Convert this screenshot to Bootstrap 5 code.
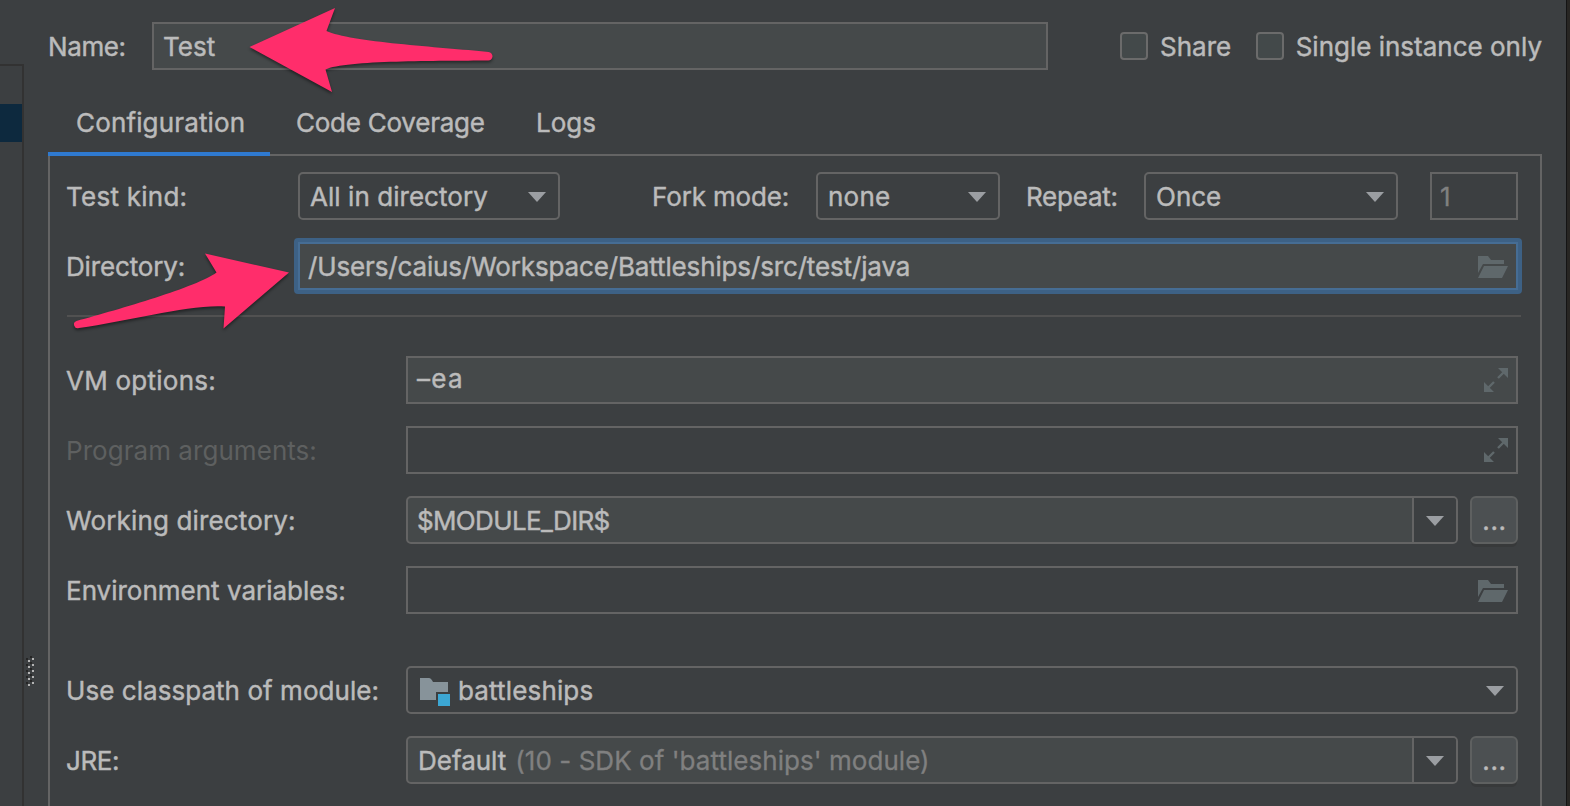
<!DOCTYPE html>
<html lang="en">
<head>
<meta charset="utf-8">
<title>Run configuration</title>
<link href="https://cdn.jsdelivr.net/npm/bootstrap@5.3.0/dist/css/bootstrap.min.css" rel="stylesheet">
<style>
body{width:1570px;height:806px;overflow:hidden;background:#3c3f41;color:#bbb;font:26px/34px Inter,"Noto Sans",sans-serif;-webkit-text-stroke:.45px}
.side{width:24px;margin-top:64px;border:2px solid #323232;border-left:0;border-bottom:0}
.side-sel{height:38px;margin-top:38px;background:#0d293e}
.grip{left:26px;top:656px}
.main{width:1518px}
.edge{width:4px;margin-left:24px;background:#282623;border-left:1px solid #141414}
.name-row{padding-top:22px}
.name-row label{width:104px}
.box{height:48px;border:2px solid #646464;padding:1px 0 0 9px;display:flex;align-items:center;white-space:nowrap}
.fill{background:#45494a}
.rnd{border-radius:5px}
.arrow{width:18px;height:10px;flex:none}
.box>.arrow{margin:0 12px 0 auto}
.w-name{width:896px}.w-kind{width:262px}.w-fork{width:184px}.w-rep{width:254px}.w-num{width:88px;margin-left:32px}
.l-kind{width:232px}.l-fork{width:164px;margin-left:92px}.l-rep{width:118px;margin-left:26px}
.check{width:28px;height:28px;flex:none;border:2px solid #6b6b6b;border-radius:4px;background:#43494a;margin-right:12px}
.share{margin-right:20.5px}
.tabs{height:84px;padding:36px 0 0 28px;white-space:nowrap}
.tabs>span{width:220px}.tabs>span+span{width:240px}
.tab-line{width:222px;height:4px;left:0;bottom:-2px;background:#2f7ad0;z-index:1}
.panel{border:2px solid #646464;border-bottom:0;height:652px;padding:16px 22px 0 16px}
.line{display:flex;align-items:center;height:48px;margin-bottom:22px;white-space:nowrap}
.line>span,.name-row>label,.name-row>.txt{padding-top:2px}
.kinds{margin-bottom:18px}
.kinds .box{padding-left:10px}
.kinds .w-num{padding-left:8px}
.dir{height:56px;margin-bottom:0}
.dir>span{width:228px}
.lab{width:340px;flex:none}
.focus-box{height:56px;margin-right:-4px;border:4px solid #3d6185;border-radius:4px}
.focus-box .box{border-color:#466d94;padding-left:8px}
.sep{height:2px;background:#515151;margin:21px -3px 39px 1px}
.ico{margin:0 8px 0 auto;fill:#5f686b;stroke:#5f686b;stroke-width:0}
.ico-ex{margin-top:-1px}
.drop{width:44px;height:44px;border-left:2px solid #646464;background:#3c3f41;margin:-1px 0 0 auto;padding:2px 0 0 12px;display:flex;align-items:center;border-radius:0 3px 3px 0}
.more{width:48px;height:48px;border:2px solid #5e6060;border-radius:6px;background:#4c5052;box-shadow:0 4px 0 -1px #37393a;margin-left:12px;display:flex;align-items:center;justify-content:center;letter-spacing:.7px;padding:1px 0 0 1px}
.env{margin-bottom:52px}
.mod{margin:3px 8px 0 3px;flex:none}
.dim{color:#808080;-webkit-text-stroke:.3px}.hint{margin-left:9px}.jre{padding-left:1px}.off{color:#5e6060;-webkit-text-stroke:0}
.t-4{letter-spacing:-.4px}.t-2{letter-spacing:-.24px}.t-1{letter-spacing:-.14px}.t-6{letter-spacing:-.65px}
.t0{letter-spacing:.05px}.t1{letter-spacing:.15px}.t2{letter-spacing:.25px}.t9{letter-spacing:1.3px}
.marks{left:0;top:0;filter:drop-shadow(0 2px 1.5px rgba(0,0,0,.45));z-index:3}
</style>
</head>
<body class="position-relative d-flex">
<div class="side flex-shrink-0"><div class="side-sel"></div></div>
<svg class="grip position-absolute" width="8" height="30" shape-rendering="crispEdges"><defs><pattern id="g" width="8" height="6" patternUnits="userSpaceOnUse"><path fill="#252525" d="M4 0h2v2h-2zM0 2h2v2h-2z"/><path fill="#b4b4b4" d="M6 2h2v2h-2zM2 4h2v2h-2z"/></pattern></defs><rect width="8" height="30" fill="url(#g)"/></svg>
<svg width="0" height="0" class="position-absolute"><defs>
  <symbol id="tri" viewBox="0 0 18 10"><path fill="#9b9ea2" d="M0 0h18l-9 10z"/></symbol>
  <symbol id="folder" viewBox="0 0 30 22"><path d="M0 0h10l3 4h13v4H5L0 17zM6 10h24l-6 12H0z"/></symbol>
  <symbol id="expand" viewBox="0 0 24 24"><path d="M14 0h10v10zM0 14v10h10z"/><path stroke-width="2.4" d="M14 10l6-6M10 14l-6 6"/></symbol>
</defs></svg>
<main class="main flex-shrink-0 ps-4">
  <div class="name-row d-flex align-items-center text-nowrap">
    <label class="t-4 flex-shrink-0">Name:</label>
    <div class="box fill w-name flex-shrink-0"><span>Test</span></div>
    <span class="check ms-auto"></span><span class="txt share">Share</span>
    <span class="check ms-1"></span><span class="txt">Single instance only</span>
  </div>
  <div class="tabs d-flex position-relative"><span class="t1">Configuration</span><span class="t-2">Code Coverage</span><span>Logs</span><div class="tab-line position-absolute"></div></div>
  <section class="panel">
    <div class="line kinds">
      <span class="l-kind t2">Test kind:</span>
      <div class="box rnd w-kind"><span class="t0">All in directory</span><svg class="arrow"><use href="#tri"/></svg></div>
      <span class="l-fork t-1">Fork mode:</span>
      <div class="box rnd w-fork"><span class="t2">none</span><svg class="arrow"><use href="#tri"/></svg></div>
      <span class="l-rep t-2">Repeat:</span>
      <div class="box rnd w-rep"><span>Once</span><svg class="arrow"><use href="#tri"/></svg></div>
      <div class="box dim w-num">1</div>
    </div>
    <div class="line dir"><span class="t-1">Directory:</span>
      <div class="focus-box flex-grow-1"><div class="box fill"><span class="t-1">/Users/caius/Workspace/Battleships/src/test/java</span><svg class="ico" width="30" height="22"><use href="#folder"/></svg></div></div></div>
    <div class="sep"></div>
    <div class="line"><span class="lab t2">VM options:</span><div class="box fill flex-grow-1"><span class="t9 pb-1">–ea</span><svg class="ico ico-ex" width="24" height="24"><use href="#expand"/></svg></div></div>
    <div class="line"><span class="lab off t0">Program arguments:</span><div class="box flex-grow-1"><svg class="ico ico-ex" width="24" height="24"><use href="#expand"/></svg></div></div>
    <div class="line"><span class="lab t1">Working directory:</span><div class="box fill rnd flex-grow-1"><span class="t-6">$MODULE_DIR$</span><div class="drop"><svg class="arrow"><use href="#tri"/></svg></div></div><div class="more">...</div></div>
    <div class="line env"><span class="lab">Environment variables:</span><div class="box flex-grow-1"><svg class="ico" width="30" height="22"><use href="#folder"/></svg></div></div>
    <div class="line"><span class="lab t0">Use classpath of module:</span><div class="box rnd flex-grow-1"><svg class="mod" width="30" height="28"><path fill="#87939a" d="M0 0h9q2 0 4 4h15v10H16v8H0z"/><path fill="#3ca7d4" d="M18 16h12v12H18z"/></svg><span class="t1">battleships</span><svg class="arrow"><use href="#tri"/></svg></div></div>
    <div class="line"><span class="lab t-4">JRE:</span><div class="box fill rnd flex-grow-1"><span class="jre">Default</span><span class="dim hint t0">(10 - SDK of 'battleships' module)</span><div class="drop"><svg class="arrow"><use href="#tri"/></svg></div></div><div class="more">...</div></div>
  </section>
</main>
<div class="edge flex-shrink-0"></div>
<svg class="marks position-absolute" width="520" height="340" fill="#ff2d6b"><path d="M249.500 47L335 8l-8.500 23C350 42 440 47 488.500 52a4.200 4.200 0 0 1-.500 8.500C440 61 345 60 325.500 69.500L332 92z"/><path d="M289 272.500L205 253.500l11.500 19C197 287 120 309 76.500 321a3.600 3.600 0 0 0 2.500 7C130 321 190 304 225 306.500l-1.500 22z"/></svg>
<script src="https://cdn.jsdelivr.net/npm/bootstrap@5.3.0/dist/js/bootstrap.bundle.min.js"></script>
</body>
</html>
